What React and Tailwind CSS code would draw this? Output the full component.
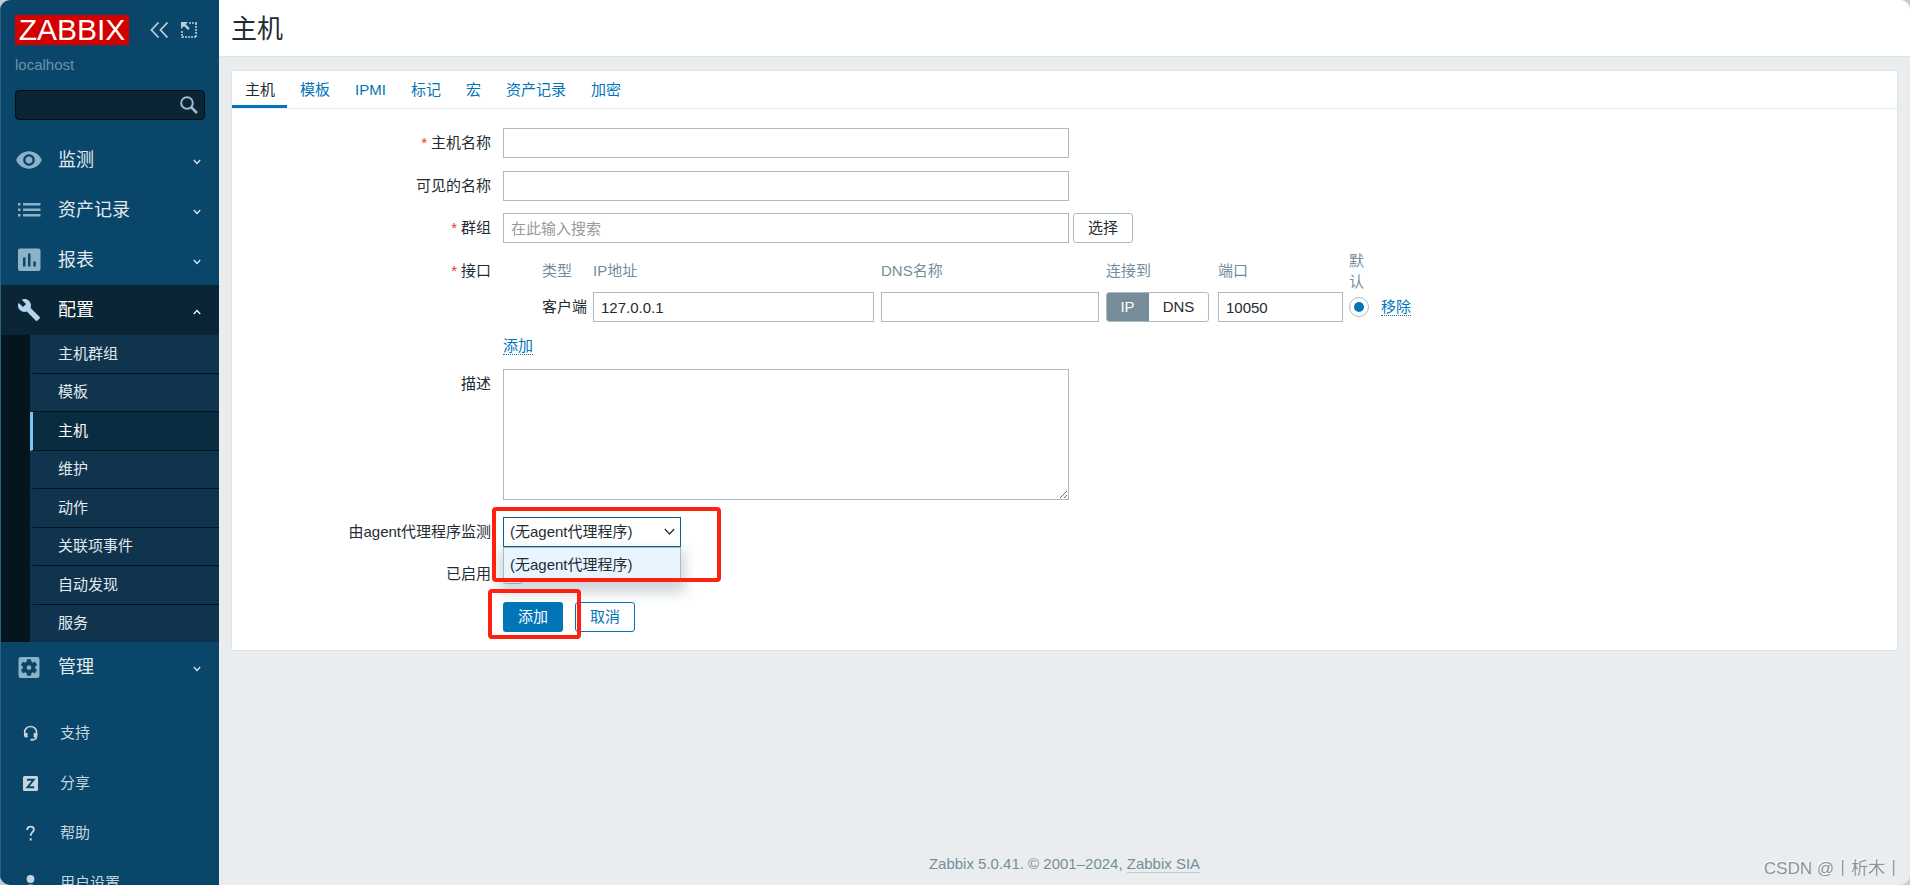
import React, { useState } from 'react';
import { MdVisibility, MdBuild, MdSettingsApplications } from 'react-icons/md';

const ListIcon = () => (
  <svg width="28" height="28" viewBox="0 0 28 28" fill="currentColor">
    <path d="M3 7h2.500v2.500H3zM3 12.600h2.500v2.500H3zM3 18h2.500v2.500H3zM8 7h17.500v2.500H8zM8 12.600h17.500v2.500H8zM8 18h17.500v2.500H8z" />
  </svg>
);

const ChartIcon = () => (
  <svg width="28" height="28" viewBox="0 0 28 28" fill="currentColor" fillRule="evenodd">
    <path d="M5 2.500h18.500a2 2 0 0 1 2 2V23a2 2 0 0 1-2 2H5a2 2 0 0 1-2-2V4.500a2 2 0 0 1 2-2zM8 11.500v9h2.500v-9zM13 7.500v13h2.500v-13zM18.300 15.500v5h2.500v-5z" />
  </svg>
);

const Chevron = ({ up }) => (
  <svg className="mt-1 ml-auto" width="8" height="6" viewBox="0 0 8 6" fill="none" stroke="currentColor" strokeWidth="1.200">
    <path d={up ? 'M.800 5 4 1.500 7.200 5' : 'M.800 1 4 4.500 7.200 1'} />
  </svg>
);

const SupportIcon = () => (
  <svg width="17" height="17" viewBox="0 0 17 17" fill="none" stroke="currentColor" strokeWidth="1.600">
    <path d="M2.700 9V7a5.900 5.500 0 0 1 11.800 0v4.500c0 2.200-1.500 3.300-4 3.300" />
    <path d="M2 8h3.600v4.600H4A2 2 0 0 1 2 10.600zM11.700 8h3.600v2.600a2 2 0 0 1-2 2h-1.600zM8.500 13.800h2.500v2H8.500z" fill="currentColor" stroke="none" />
  </svg>
);

const ShareIcon = () => (
  <svg width="17" height="17" viewBox="0 0 17 17" fill="none">
    <rect x="1" y="1" width="15" height="15" rx="1.500" fill="currentColor" />
    <path d="M5 4.800h6.600L5.600 12.200h6.600" stroke="#0a466a" strokeWidth="2" />
  </svg>
);

const HelpIcon = () => (
  <svg width="17" height="17" viewBox="0 0 17 17" fill="none" stroke="currentColor" strokeWidth="1.900">
    <path d="M5.200 4.900C5.200 2.500 6.500 1.600 8.600 1.600s3.300 1.100 3.300 2.900c0 2.700-3.200 2.700-3.200 6.300" />
    <path d="M7.700 13.200h2v2.300h-2z" fill="currentColor" stroke="none" />
  </svg>
);

const UserIcon = () => (
  <svg width="17" height="17" viewBox="0 0 17 17" fill="currentColor">
    <circle cx="8.500" cy="4" r="3.900" />
    <path d="M1.500 16v-3c0-2.400 4-3.400 7-3.400s7 1 7 3.400v3z" />
  </svg>
);

const mainMenu = [
  { label: '监测', icon: <MdVisibility size={30} /> },
  { label: '资产记录', icon: <ListIcon /> },
  { label: '报表', icon: <ChartIcon /> },
  {
    label: '配置',
    icon: <MdBuild size={24} />,
    children: ['主机群组', '模板', '主机', '维护', '动作', '关联项事件', '自动发现', '服务']
  },
  { label: '管理', icon: <MdSettingsApplications size={31} /> }
];

const userMenu = [
  { label: '支持', icon: <SupportIcon /> },
  { label: '分享', icon: <ShareIcon /> },
  { label: '帮助', icon: <HelpIcon /> },
  { label: '用户设置', icon: <UserIcon /> }
];

const tabs = ['主机', '模板', 'IPMI', '标记', '宏', '资产记录', '加密'];

const inputClass = 'h-[30px] border border-[#acbbc2] bg-white px-[7px] text-[15px] leading-5 outline-none';

const Sidebar = () => (
  <aside className="w-[219px] shrink-0 overflow-hidden border-l border-[#2c5f7e] bg-[#0a466a] text-[#e3eaef]">
    <div className="flex items-center px-3.5 pt-[15px]">
      <a href="#" className="flex h-[30px] w-[114px] items-center justify-center bg-[#d40000] text-[30px] leading-[30px] text-white">ZABBIX</a>
      <button type="button" aria-label="Collapse" className="ml-5 text-[#b9ced9]">
        <svg width="20" height="18" viewBox="0 0 20 18" fill="none" stroke="currentColor" strokeWidth="1.800">
          <path d="M9.500 1.500 2.500 9l7 7.500M18.500 1.500l-7 7.500 7 7.500" />
        </svg>
      </button>
      <button type="button" aria-label="Compact" className="ml-3 text-[#b9ced9]">
        <svg width="16" height="16" viewBox="0 0 16 16" fill="none" stroke="currentColor">
          <path d="M8 1h8M15 1v14M1 15h14M1 9v7" strokeWidth="1.600" strokeDasharray="2 1" />
          <path d="M0 0h7L4.700 2.300l4 4-1.700 1.700-4-4L0 7z" fill="currentColor" stroke="none" />
        </svg>
      </button>
    </div>
    <div className="mt-2.5 px-3.5 text-[15px] leading-5 text-[#6c93aa]">localhost</div>
    <form className="mx-3.5 mt-[15px] flex h-[30px] items-center rounded-[4px] border border-[#020c12] bg-[#0a2636] pr-1.5">
      <input aria-label="Search" className="min-w-0 flex-1 bg-transparent px-2 text-[15px] outline-none" />
      <button type="button" aria-label="Search" className="text-[#9dbccb]">
        <svg width="18" height="18" viewBox="0 0 18 18" fill="none" stroke="currentColor" strokeWidth="2">
          <circle cx="7" cy="7" r="5.800" />
          <path d="m11 11 6 6" strokeWidth="2.500" />
        </svg>
      </button>
    </form>
    <nav className="mt-[15px] text-lg leading-6">
      {mainMenu.map(item => (
        <div key={item.label}>
          <a href="#" className={`flex h-[50px] items-center pr-[18px] pl-3.5 ${item.children ? 'bg-[#0a2636] text-white' : ''}`}>
            <span className={`flex w-7 justify-center ${item.children ? 'text-[#b3d4ea]' : 'text-[#8cb2c9]'}`}>{item.icon}</span>
            <span className="ml-[15px]">{item.label}</span>
            <Chevron up={item.children} />
          </a>
          {item.children && (
            <div className="flex h-[307px] flex-col border-l-[29px] border-[#04151e] bg-[#10344d] text-[15px] leading-5">
              {item.children.map(child => (
                <a
                  key={child}
                  href="#"
                  className={`flex flex-1 items-center border-b border-b-[#04151e] pl-[25px] last:border-b-0 ${child === '主机' ? 'border-l-[3px] border-l-[#79c6fb] bg-[#0a2c40] text-white' : 'border-l-[3px] border-l-transparent'}`}
                >
                  {child}
                </a>
              ))}
            </div>
          )}
        </div>
      ))}
    </nav>
    <nav className="mt-4 text-[15px] leading-5 text-[#c5d5de]">
      {userMenu.map(item => (
        <a key={item.label} href="#" className="flex h-[50px] items-center pl-[21px]">
          {item.icon}
          <span className="ml-[21px]">{item.label}</span>
        </a>
      ))}
    </nav>
  </aside>
);

const Row = ({ label, htmlFor, required, children }) => (
  <div className="flex">
    <label htmlFor={htmlFor} className="w-[259px] shrink-0 pt-[5px] text-right">
      {required && <span className="mr-1 text-[#e33734]">*</span>}
      {label}
    </label>
    <div className="ml-3 min-w-0 flex-1">{children}</div>
  </div>
);

const Interfaces = () => (
  <div>
    <table className="ml-[39px] border-collapse text-left">
      <thead>
        <tr className="text-[#768d99]">
          <th className="w-[51px] font-normal">类型</th>
          <th className="w-[288px] font-normal">IP地址</th>
          <th className="w-[225px] font-normal">DNS名称</th>
          <th className="w-28 font-normal">连接到</th>
          <th className="w-[131px] font-normal">端口</th>
          <th className="w-8 pr-4 font-normal leading-[21px]">默认</th>
          <td />
        </tr>
      </thead>
      <tbody>
        <tr>
          <td>客户端</td>
          <td className="pr-[7px]"><input aria-label="IP地址" defaultValue="127.0.0.1" className={`${inputClass} block w-full`} /></td>
          <td className="pr-[7px]"><input aria-label="DNS名称" className={`${inputClass} block w-full`} /></td>
          <td className="pr-[9px]">
            <div className="flex h-[30px] overflow-hidden rounded-[3px] border border-[#acbbc2]">
              <button type="button" className="-my-px -ml-px w-[43px] bg-[#768d99] text-white">IP</button>
              <button type="button" className="flex-1">DNS</button>
            </div>
          </td>
          <td className="pr-1.5"><input aria-label="端口" defaultValue="10050" className={`${inputClass} block w-full`} /></td>
          <td>
            <input
              type="radio"
              aria-label="默认"
              defaultChecked
              className="flex size-5 appearance-none items-center justify-center rounded-full border border-[#acbbc2] before:size-2.5 before:rounded-full before:bg-[#0275b8]"
            />
          </td>
          <td><a href="#" className="border-b border-dotted border-[#0275b8] text-[#0275b8]">移除</a></td>
        </tr>
      </tbody>
    </table>
    <div className="mt-3.5"><a href="#" className="border-b border-dotted border-[#0275b8] text-[#0275b8]">添加</a></div>
  </div>
);

const ProxySelect = () => (
  <div className="relative z-10 w-[178px]">
    <select id="proxy" className="block h-[30px] w-full appearance-none border border-[#0a5f96] bg-white px-1.5 text-[15px] leading-5 outline-none">
      <option>(无agent代理程序)</option>
    </select>
    <svg className="pointer-events-none absolute top-[11px] right-[6px]" width="11" height="8" viewBox="0 0 11 8" fill="none" stroke="#1f2c33" strokeWidth="1.200">
      <path d="M.800 1 5.500 6 10.200 1" />
    </svg>
    <div className="absolute top-[30px] left-0 h-[34px] w-full border border-[#acbbc2] bg-[#e8f5ff] px-1.5 pt-[7px] leading-5 shadow-[0_8px_12px_4px_rgba(120,140,150,0.350)]">(无agent代理程序)</div>
    <div className="pointer-events-none absolute -top-2.5 -left-[11px] h-[75px] w-[229px] rounded-[4px] border-4 border-[#ff2010]" />
  </div>
);

const App = () => {
  const [activeTab, setActiveTab] = useState('主机');

  return (
    <div className="h-screen bg-[#c9cdd0]">
      <div className="flex h-full overflow-hidden rounded-[10px] bg-[#e9edf0] font-['Liberation_Sans','Noto_Sans_CJK_SC',sans-serif] text-[15px] leading-5 text-[#1f2c33]">
        <Sidebar />
        <div className="flex min-w-0 flex-1 flex-col">
          <header className="h-[57px] shrink-0 border-b border-[#dfe4e7] bg-white px-3 pt-[13px]">
            <h1 className="text-[26px] leading-8">主机</h1>
          </header>

          <main className="mx-3 mt-[13px] border border-[#dfe4e7] bg-white pb-[18px]">
            <div className="flex h-[38px] border-b border-[#e9edf0]">
              {tabs.map(tab => (
                <button
                  key={tab}
                  type="button"
                  onClick={() => setActiveTab(tab)}
                  className={`border-b-[3px] pt-[3px] pr-3 pl-[13px] ${tab === activeTab ? 'border-[#0275b8]' : 'border-transparent text-[#0275b8]'}`}
                >
                  {tab}
                </button>
              ))}
            </div>

            <form className="mt-[19px] flex flex-col">
              <Row label="主机名称" htmlFor="host" required>
                <input id="host" className={`${inputClass} block w-[566px]`} />
              </Row>
              <div className="mt-[13px]">
                <Row label="可见的名称" htmlFor="visible">
                  <input id="visible" className={`${inputClass} block w-[566px]`} />
                </Row>
              </div>
              <div className="mt-3">
                <Row label="群组" htmlFor="groups" required>
                  <div className="flex gap-1">
                    <input id="groups" placeholder="在此输入搜索" className={`${inputClass} w-[566px] placeholder:text-[#9a9a9a]`} />
                    <button type="button" className="h-[30px] w-[60px] rounded-[3px] border border-[#acbbc2]">选择</button>
                  </div>
                </Row>
              </div>
              <div className="mt-[7px] [&_label]:pt-[11px]">
                <Row label="接口" required><Interfaces /></Row>
              </div>
              <div className="mt-[13px]">
                <Row label="描述" htmlFor="description">
                  <textarea id="description" className="block h-[131px] w-[566px] border border-[#acbbc2] px-[7px] py-1 outline-none" />
                </Row>
              </div>
              <div className="mt-[17px]">
                <Row label="由agent代理程序监测" htmlFor="proxy"><ProxySelect /></Row>
              </div>
              <div className="mt-3">
                <Row label="已启用" htmlFor="enabled">
                  <input id="enabled" type="checkbox" className="mt-[5px] block size-5 appearance-none rounded-[3px] border border-[#acbbc2]" />
                </Row>
              </div>
              <div className="mt-[18px] ml-[271px] flex gap-3">
                <div className="relative">
                  <button type="button" className="block h-[30px] w-[60px] rounded-[3px] bg-[#0275b8] text-white">添加</button>
                  <div className="pointer-events-none absolute -top-[13px] -left-[15px] z-10 h-[50px] w-[93px] rounded-[4px] border-4 border-[#ff2010]" />
                </div>
                <button type="button" className="h-[30px] w-[60px] rounded-[3px] border border-[#0275b8] text-[#0275b8]">取消</button>
              </div>
            </form>
          </main>

          <footer className="relative mt-auto pb-[11px] text-center text-[#768d99]">
            Zabbix 5.0.41. © 2001–2024, <a href="#" className="border-b border-[#c0c8cc]">Zabbix SIA</a>
            <span className="absolute right-2 bottom-1 text-[17px] leading-6 text-[#8e9396] [text-shadow:-1px_-1px_0_#fff]">CSDN @丨析木丨</span>
          </footer>
        </div>
      </div>
    </div>
  );
};

export default App;
